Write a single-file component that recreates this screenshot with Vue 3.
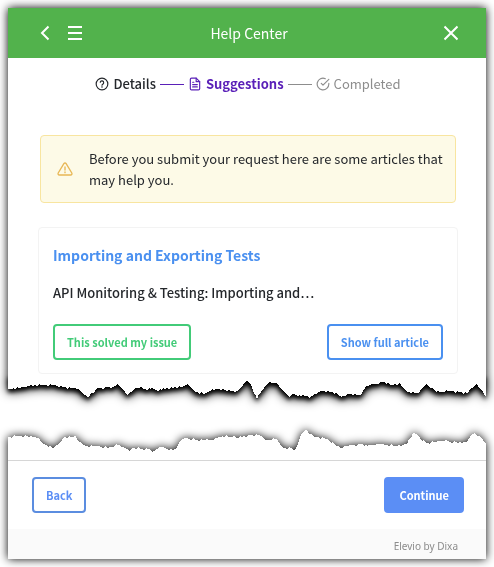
<template>
  <div class="help-page">
    <main class="sheet">
      <header class="help-header">
        <div class="header-side">
          <button type="button" class="icon-btn" aria-label="Back">
            <svg width="10" height="16" viewBox="0 0 10 16">
              <path d="M8.500 1.500L2 8l6.500 6.500" fill="none" stroke="#fff" stroke-width="2" />
            </svg>
          </button>
          <button type="button" class="icon-btn" aria-label="Menu">
            <svg width="14" height="16" viewBox="0 0 14 16">
              <path d="M0 2h14M0 8h14M0 14h14" stroke="#fff" stroke-width="2" />
            </svg>
          </button>
        </div>
        <h1>Help Center</h1>
        <div class="header-side end">
          <button type="button" class="icon-btn" aria-label="Close">
            <svg width="14" height="16" viewBox="0 0 14 16">
              <path d="M0.500 1.500l13 13M13.500 1.500l-13 13" stroke="#fff" stroke-width="2" />
            </svg>
          </button>
        </div>
      </header>

      <div class="sheet-body">
        <ol class="steps">
          <li v-for="step in steps" :key="step.label" class="step" :class="step.state">
            <svg class="step-icon" width="14" height="14" viewBox="0 0 24 24">
              <path v-for="d in step.icon" :key="d" :d="d" />
            </svg>
            <span>{{ step.label }}</span>
          </li>
        </ol>

        <div class="notice">
          <svg class="notice-icon" width="16" height="16" viewBox="0 0 24 24">
            <path d="M10.300 3.900L1.800 18a2 2 0 0 0 1.700 3h17a2 2 0 0 0 1.700-3L13.700 3.900a2 2 0 0 0-3.400 0z" />
            <path d="M12 9v4.500M12 16.500v1" />
          </svg>
          <p>Before you submit your request here are some articles that may help you.</p>
        </div>

        <article class="article-card">
          <h2><a href="#">Importing and Exporting Tests</a></h2>
          <p>API Monitoring &amp; Testing: Importing and…</p>
          <div class="card-actions">
            <button type="button" class="btn btn-solved">This solved my issue</button>
            <button type="button" class="btn btn-show">Show full article</button>
          </div>
        </article>
      </div>

      <svg class="tear tear-top" viewBox="0 375 478 26" preserveAspectRatio="none" aria-hidden="true">
        <polygon class="tear-shade" :points="upperTear" />
        <polygon class="tear-paper" :points="upperTear" />
      </svg>
    </main>

    <footer class="sheet">
      <svg class="tear" viewBox="0 428 478 32" preserveAspectRatio="none" aria-hidden="true">
        <polygon class="tear-paper" :points="lowerTear" />
      </svg>
      <div class="form-actions">
        <button type="button" class="btn btn-back">Back</button>
        <button type="button" class="btn btn-continue">Continue</button>
      </div>
      <div class="credit">Elevio by Dixa</div>
    </footer>
  </div>
</template>

<script setup>
const steps = [
  {
    label: 'Details',
    state: 'done',
    icon: [
      'M12 2a10 10 0 1 0 0 20a10 10 0 1 0 0-20z',
      'M9 9a3 3 0 0 1 5.900 1c0 2-2.900 2.500-2.900 4M12 16.500v1'
    ]
  },
  {
    label: 'Suggestions',
    state: 'active',
    icon: [
      'M14 2H6a2 2 0 0 0-2 2v16a2 2 0 0 0 2 2h12a2 2 0 0 0 2-2V8z',
      'M14 2v6h6M8 9h2M8 13h8M8 17h8'
    ]
  },
  {
    label: 'Completed',
    state: 'pending',
    icon: ['M22 11v1a10 10 0 1 1-6-9.100', 'M22 4L12 14l-3-3']
  }
]

// Corner points of the torn edges, as [x, y]
const upperCorners = [
  [0, 389], [5, 388], [12, 388], [19, 386], [34, 385], [45, 385], [55, 387], [70, 389], [74, 393],
  [79, 397], [85, 393], [89, 388], [105, 387], [109, 384], [114, 389], [119, 395], [127, 388],
  [142, 389], [153, 390], [159, 388], [174, 387], [179, 384], [184, 388], [187, 392], [196, 394],
  [202, 391], [209, 389], [215, 389], [219, 391], [229, 391], [235, 385], [239, 380], [244, 387],
  [249, 399], [254, 390], [260, 383], [268, 383], [273, 389], [276, 392], [281, 397], [284, 394],
  [291, 395], [304, 397], [309, 393], [314, 391], [328, 393], [333, 397], [339, 394], [353, 395],
  [358, 386], [366, 384], [376, 382], [383, 385], [391, 383], [399, 392], [411, 393], [418, 384],
  [428, 392], [441, 391], [459, 393], [464, 388], [468, 384], [473, 390], [478, 396]
]

const lowerCorners = [
  [0, 437], [9, 436], [30, 437], [34, 443], [45, 448], [52, 442], [57, 437], [68, 437], [72, 442],
  [77, 446], [89, 446], [100, 448], [109, 445], [117, 448], [121, 451], [124, 448], [139, 449],
  [144, 452], [151, 447], [165, 450], [169, 447], [173, 440], [177, 438], [189, 440], [205, 440],
  [214, 436], [224, 437], [230, 438], [240, 435], [251, 435], [259, 440], [268, 439], [275, 448],
  [283, 448], [286, 451], [289, 446], [293, 435], [298, 429], [301, 434], [308, 437], [319, 439],
  [332, 448], [338, 446], [354, 444], [359, 446], [369, 444], [389, 446], [398, 445], [401, 439],
  [406, 433], [418, 443], [436, 441], [454, 443], [460, 440], [463, 435], [467, 433], [478, 443]
]

// Fill in small teeth between the corner points
const roughen = (corners) => {
  const teeth = [0, -1, 0, 0, 1, 0, -1, 1, 0, -1, 0]
  const points = []
  corners.slice(1).forEach(([x2, y2], i) => {
    const [x1, y1] = corners[i]
    points.push(`${x1},${y1}`)
    for (let x = x1 + 2; x < x2; x += 2) {
      const y = y1 + ((y2 - y1) * (x - x1)) / (x2 - x1)
      points.push(`${x},${Math.round(y) + teeth[x % teeth.length]}`)
    }
  })
  points.push(corners[corners.length - 1].join(','))
  return points.join(' ')
}

const upperTear = `0,375 ${roughen(upperCorners)} 478,375`
const lowerTear = `0,460 ${roughen(lowerCorners)} 478,460`
</script>

<style>
body {
  margin: 0;
  background: #fff;
}
</style>

<style scoped>
.help-page {
  display: flex;
  flex-direction: column;
  gap: 27px;
  padding: 8px;
  overflow: hidden;
  font-family: "Noto Sans CJK SC", "Noto Sans", sans-serif;
  font-size: 13px;
  color: #24272b;
}

.sheet {
  filter: drop-shadow(0 0 5px #000);
}

.sheet-body,
.form-actions {
  background-color: #fff;
}

h1, h2, p, ol {
  margin: 0;
  padding: 0;
}

button {
  font-family: inherit;
  cursor: pointer;
}

.help-header {
  display: flex;
  align-items: center;
  height: 50px;
  padding: 0 28px 0 32px;
  box-sizing: border-box;
  background-color: #52b24c;
}

.help-header h1 {
  font-size: 14px;
  font-weight: 400;
  line-height: 20px;
  color: #fff;
}

.header-side {
  display: flex;
  flex: 1;
  gap: 18px;
}

.header-side.end {
  justify-content: flex-end;
}

.icon-btn {
  display: flex;
  padding: 0;
  border: none;
  background: none;
}

/* Stays above the shade of the torn edge */
.sheet-body {
  position: relative;
  z-index: 1;
  padding: 16px 28px 1px 30px;
}

.steps {
  display: flex;
  justify-content: center;
  list-style: none;
}

.step {
  display: flex;
  align-items: center;
  gap: 4px;
  line-height: 20px;
  font-weight: 500;
}

.step + .step::before {
  content: "";
  width: 24px;
  height: 1px;
  margin-left: 4px;
  background-color: currentColor;
}

.step.active {
  color: #5a20b8;
  font-weight: 700;
}

.step.pending {
  color: #8d8d8d;
  font-weight: 400;
}

.step-icon,
.notice-icon {
  flex-shrink: 0;
  fill: none;
  stroke: currentColor;
  stroke-width: 2;
  stroke-linecap: round;
  stroke-linejoin: round;
}

.notice {
  display: flex;
  align-items: center;
  gap: 16px;
  margin: 41px 2px 24px;
  padding: 12px 8px 12px 16px;
  border: 1px solid #f8e5a0;
  border-radius: 4px;
  background-color: #fdfae7;
}

.notice p {
  line-height: 21px;
}

.notice-icon {
  color: #e8b755;
}

.article-card {
  padding: 16px 14px 13px;
  border: 1px solid #f3f3f3;
  border-radius: 4px;
}

.article-card h2 {
  font-size: 14px;
  font-weight: 700;
  line-height: 22px;
}

.article-card a {
  color: #4a90f0;
  text-decoration: none;
}

.article-card p {
  margin: 16px 0 21px;
  font-weight: 500;
  line-height: 21px;
}

.card-actions,
.form-actions {
  display: flex;
  justify-content: space-between;
}

.btn {
  height: 36px;
  padding: 0 12px;
  border: 2px solid;
  border-radius: 4px;
  background-color: #fff;
  font-size: 11px;
  font-weight: 700;
  line-height: 16px;
}

.btn-solved {
  border-color: #42cb78;
  color: #42cb78;
}

.btn-show {
  border-color: #4a90f0;
  color: #4a90f0;
}

.btn-back {
  border-color: #5b8de0;
  color: #5b8ef5;
}

.btn-continue {
  padding: 0 13px;
  border-color: #5b8ef5;
  background-color: #5b8ef5;
  color: #fff;
}

.tear {
  display: block;
  width: 100%;
  height: 32px;
  overflow: visible;
}

.tear-top {
  height: 26px;
}

.tear-paper {
  fill: #fff;
  shape-rendering: crispEdges;
}

.tear-shade {
  fill: #000;
  filter: drop-shadow(0 3px 2px #000);
}

.form-actions {
  padding: 16px 22px 16px 24px;
  border-top: 1px solid #d6d6d6;
}

.credit {
  padding: 9px 28px 5px;
  background-color: #fafafa;
  font-family: "Noto Sans", "Open Sans", sans-serif;
  font-size: 10px;
  line-height: 16px;
  text-align: right;
  color: #8c8c8c;
}
</style>
